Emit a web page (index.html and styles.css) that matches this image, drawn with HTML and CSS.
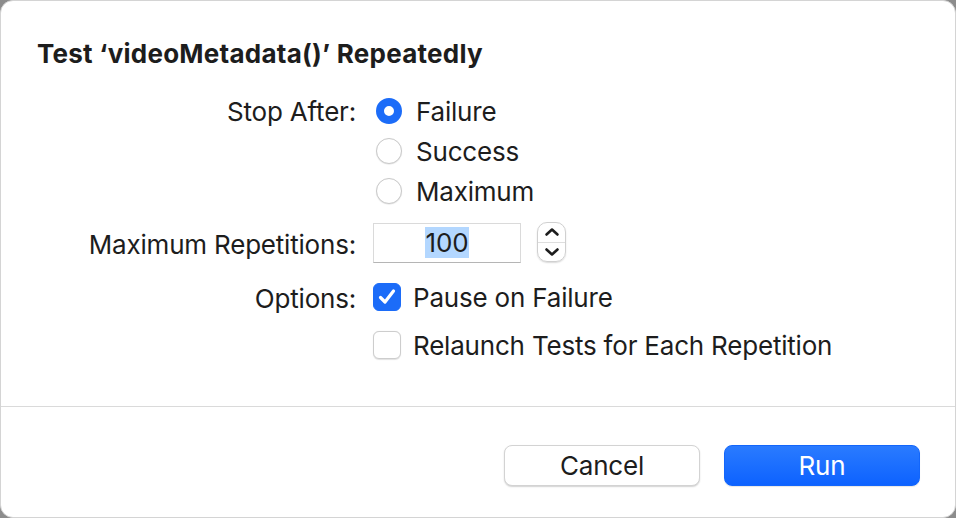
FILE: index.html
```html
<!DOCTYPE html>
<html>
<head>
<meta charset="utf-8">
<link rel="stylesheet" href="styles.css">
</head>
<body>
<div class="window">
  <h1 class="title">Test ‘videoMetadata()’ Repeatedly</h1>
  <div class="form">
    <div class="label">Stop After:</div>
    <div class="control"><span class="radio on"></span><span class="opt">Failure</span></div>
    <div class="label"></div>
    <div class="control"><span class="radio"></span><span class="opt">Success</span></div>
    <div class="label"></div>
    <div class="control"><span class="radio"></span><span class="opt">Maximum</span></div>

    <div class="label row-field">Maximum Repetitions:</div>
    <div class="control row-field">
      <div class="field"><span class="sel">100</span></div>
      <div class="stepper">
        <svg class="chev" width="16" height="10" viewBox="0 0 16 10"><path d="M2.5 7.5 L8 2.5 L13.5 7.5" fill="none" stroke="#1d1d1d" stroke-width="2.6" stroke-linecap="round" stroke-linejoin="round"/></svg>
        <div class="step-div"></div>
        <svg class="chev" width="16" height="10" viewBox="0 0 16 10"><path d="M2.5 2.5 L8 7.5 L13.5 2.5" fill="none" stroke="#1d1d1d" stroke-width="2.6" stroke-linecap="round" stroke-linejoin="round"/></svg>
      </div>
    </div>

    <div class="label row-check">Options:</div>
    <div class="control row-check">
      <span class="check on"><svg width="22" height="20" viewBox="0 0 22 20"><path d="M4.5 10.5 L9 15 L17.5 4" fill="none" stroke="#fff" stroke-width="3.2" stroke-linecap="round" stroke-linejoin="round"/></svg></span>
      <span class="opt">Pause on Failure</span>
    </div>
    <div class="label row-check"></div>
    <div class="control row-check"><span class="check"></span><span class="opt">Relaunch Tests for Each Repetition</span></div>
  </div>
  <div class="divider"></div>
  <div class="footer">
    <button class="btn">Cancel</button>
    <button class="btn primary">Run</button>
  </div>
</div>
</body>
</html>
```

FILE: styles.css
```css
html, body {
  margin: 0;
  padding: 0;
  background: #8c8c8c;
}
body {
  width: 956px;
  height: 518px;
  overflow: hidden;
  font-family: Inter, "Liberation Sans", sans-serif;
  color: #1d1d1d;
}
.window {
  box-sizing: border-box;
  width: 956px;
  height: 518px;
  background: #fff;
  border: 1px solid #d4d4d4;
  border-radius: 13px;
  display: flex;
  flex-direction: column;
}
.title {
  margin: 37px 0 0 36px;
  font-size: 26px;
  line-height: 32px;
  font-weight: 700;
  letter-spacing: 0.25px;
}
.form {
  margin-top: 21px;
  display: grid;
  grid-template-columns: 355px 1fr;
  grid-template-rows: 40px 40px 40px 52px 58px 48px;
  column-gap: 17px;
  align-items: center;
  font-size: 26px;
  letter-spacing: -0.2px;
}
.label {
  text-align: right;
  white-space: nowrap;
}
.control {
  display: flex;
  align-items: center;
  height: 100%;
}
.opt {
  white-space: nowrap;
}
.radio {
  box-sizing: border-box;
  width: 26px;
  height: 26px;
  border-radius: 50%;
  border: 1px solid #c9c9c9;
  background: #fff;
  box-shadow: 0 0.5px 1px rgba(0,0,0,0.12);
  margin: 0 14px 0 3px;
  flex: none;
}
.radio.on {
  border: 8px solid #1c6cf8;
  background: #fff;
  box-shadow: none;
}
.row-field {
  align-self: end;
  height: 41px;
}
.label.row-field {
  line-height: 41px;
  padding-top: 2px;
  box-sizing: border-box;
}
.field {
  box-sizing: border-box;
  width: 148px;
  height: 40px;
  border: 1px solid #dadada;
  border-bottom-color: #b5b5b5;
  display: flex;
  align-items: center;
  justify-content: center;
}
.sel {
  background: #b3d7ff;
  line-height: 31px;
  padding: 0 1px;
}
.stepper {
  box-sizing: border-box;
  margin-left: 16px;
  width: 29px;
  height: 40px;
  border: 1px solid #d0d0d0;
  border-radius: 10px;
  box-shadow: 0 1px 1.5px rgba(0,0,0,0.15);
  display: flex;
  flex-direction: column;
  align-items: center;
  justify-content: space-evenly;
  margin-top: -1px;
}
.step-div {
  width: 100%;
  height: 1px;
  background: #dedede;
}
.chev {
  display: block;
}
.row-check {
  align-self: end;
  height: 48px;
}
.label.row-check {
  line-height: 48px;
  padding-top: 2px;
  box-sizing: border-box;
}
.check {
  box-sizing: border-box;
  width: 28px;
  height: 28px;
  border-radius: 6px;
  border: 1px solid #cdcdcd;
  background: #fff;
  box-shadow: 0 0.5px 1px rgba(0,0,0,0.12);
  margin-right: 12px;
  flex: none;
  display: flex;
  align-items: center;
  justify-content: center;
}
.check.on {
  background: #1c6cf8;
  border-color: #1c6cf8;
  box-shadow: none;
}
.divider {
  margin-top: auto;
  height: 1px;
  background: #dadada;
}
.footer {
  display: flex;
  justify-content: flex-end;
  gap: 24px;
  padding: 38px 35px 31px 0;
}
.btn {
  box-sizing: border-box;
  width: 196px;
  height: 41px;
  border-radius: 8px;
  border: 1px solid #d3d3d3;
  background: #fff;
  box-shadow: 0 1px 1.5px rgba(0,0,0,0.18);
  font-family: Inter, "Liberation Sans", sans-serif;
  font-size: 26px;
  letter-spacing: -0.2px;
  color: #1d1d1d;
  padding: 0;
}
.btn.primary {
  background: linear-gradient(#2a7bff, #0d62ff);
  border-color: #1366fb;
  color: #fff;
  box-shadow: 0 1px 1px rgba(0,0,0,0.1);
}
```
